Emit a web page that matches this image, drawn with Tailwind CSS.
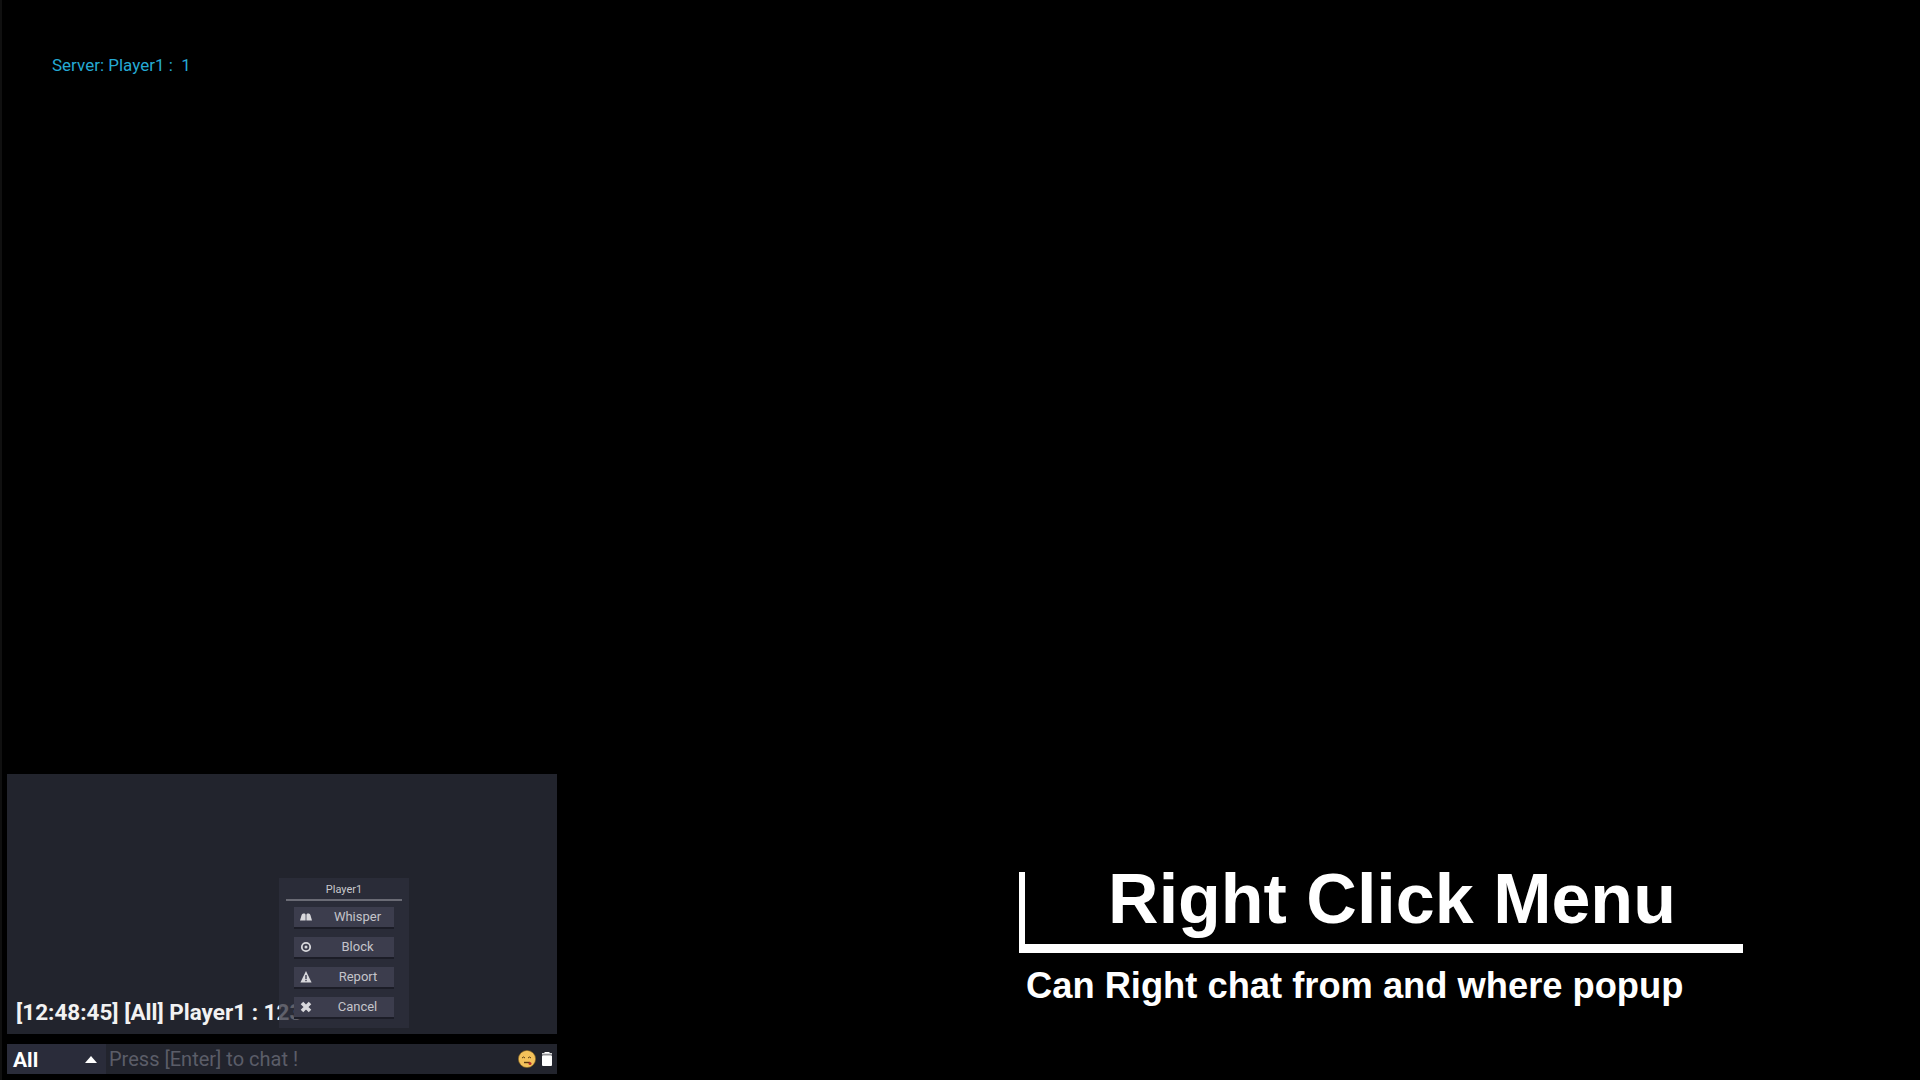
<!DOCTYPE html>
<html lang="en">
<head>
    <meta charset="UTF-8">
    <title>Right Click Menu</title>
    <script src="https://cdn.jsdelivr.net/npm/@tailwindcss/browser@4"></script>
</head>
<body class="bg-black w-[1920px] h-[1080px] overflow-hidden relative font-['Roboto',sans-serif]">
    <!-- faint strip down the left edge -->
    <div class="absolute left-0 top-0 w-[2px] h-full bg-[#101010]"></div>

    <!-- Server message -->
    <div class="pt-[54px] pl-[52px] text-[17px] leading-[22px] text-[#25aad4]">Server: Player1 :&nbsp; 1</div>

    <!-- Chat box -->
    <div class="absolute left-[7px] top-[774px] w-[550px]">
        <div class="relative h-[260px] bg-[#22242d] flex items-end pb-[7px] pl-[9px]">
            <div class="text-[22.5px] leading-[30px] font-bold text-[#f2f2f2] whitespace-nowrap">[12:48:45] [All] Player1 : 123</div>

            <!-- Right click menu -->
            <div class="absolute left-[272px] top-[104px] w-[130px] h-[150px] bg-[#2d2f3c]/75 flex flex-col items-center">
                <div class="h-[21px] leading-[22px] pt-[1px] text-[11px] text-[#c8c8cc]">Player1</div>
                <div class="w-[116px] h-[2px] bg-[#6a6b75] mb-[6px]"></div>
                <div class="flex flex-col gap-[8px]">
                    <div class="w-[100px] h-[22px] bg-[#3c3d4d] border-b-2 border-[#1c1d27] flex items-center text-[13px] text-[#c4c4ca]">
                        <svg class="w-[14px] h-[14px] ml-[5px]" viewBox="0 0 14 14" fill="#d8d8dc"><path d="M1 10.5 L2.6 5 Q3 3.5 4.2 3.5 H5.6 Q6.6 3.5 6.6 5 V10.5 Z M7.4 10.5 V5 Q7.4 3.5 8.4 3.5 H9.8 Q11 3.5 11.4 5 L13 10.5 Z"/></svg>
                        <span class="flex-1 text-center pl-[8px]">Whisper</span>
                    </div>
                    <div class="w-[100px] h-[22px] bg-[#3c3d4d] border-b-2 border-[#1c1d27] flex items-center text-[13px] text-[#c4c4ca]">
                        <svg class="w-[14px] h-[14px] ml-[5px]" viewBox="0 0 14 14" fill="none" stroke="#d8d8dc" stroke-width="1.8"><circle cx="7" cy="7" r="4.2"/><circle cx="7" cy="7" r="1.5" fill="#d8d8dc" stroke="none"/></svg>
                        <span class="flex-1 text-center pl-[8px]">Block</span>
                    </div>
                    <div class="w-[100px] h-[22px] bg-[#3c3d4d] border-b-2 border-[#1c1d27] flex items-center text-[13px] text-[#c4c4ca]">
                        <svg class="w-[14px] h-[14px] ml-[5px]" viewBox="0 0 14 14" fill="#d8d8dc"><path d="M7 1 L12.6 12.5 H1.4 Z"/><rect x="6.3" y="5" width="1.4" height="4" fill="#3c3d4d"/><rect x="6.3" y="9.8" width="1.4" height="1.4" fill="#3c3d4d"/></svg>
                        <span class="flex-1 text-center pl-[9px]">Report</span>
                    </div>
                    <div class="w-[100px] h-[22px] bg-[#3c3d4d] border-b-2 border-[#1c1d27] flex items-center text-[13px] text-[#c4c4ca]">
                        <svg class="w-[14px] h-[14px] ml-[5px]" viewBox="0 0 14 14" stroke="#d8d8dc" stroke-width="3.6"><path d="M3 3 L11 11 M11 3 L3 11"/></svg>
                        <span class="flex-1 text-center pl-[8px]">Cancel</span>
                    </div>
                </div>
            </div>
        </div>

        <!-- Input bar -->
        <div class="mt-[10px] h-[30px] bg-[#22242d] flex items-center">
            <div class="w-[99px] h-full bg-[#2a2c3a] flex items-center justify-between pl-[6px] pr-[9px]">
                <span class="text-[21px] font-bold text-white pt-[4px]">All</span>
                <svg class="w-[12px] h-[7px]" viewBox="0 0 12 7" fill="#fff"><path d="M6 0 L12 7 H0 Z"/></svg>
            </div>
            <div class="flex-1 pl-[3px] text-[20px] text-[#5b5d68]">Press [Enter] to chat !</div>
            <svg class="w-[18px] h-[18px] mr-[5px]" viewBox="0 0 18 18"><ellipse cx="9" cy="9" rx="8.6" ry="8.6" fill="#f4c25a" stroke="#8a6420" stroke-width="0.6"/><path d="M4 8 Q5.5 6 7 8 M10 8 Q11.5 6 13 8" stroke="#5a3a10" fill="none"/><path d="M6 12.5 H12" stroke="#5a3a10" stroke-width="1.4"/><circle cx="12" cy="13.5" r="1.5" fill="#b5332e"/></svg>
            <svg class="w-[12px] h-[14px] mr-[4px]" viewBox="0 0 12 14" fill="#fff"><rect x="3.5" y="0" width="5" height="1.2"/><rect x="1" y="1.2" width="10" height="1.3"/><rect x="1" y="3.3" width="10" height="10.7" rx="1"/></svg>
        </div>
    </div>

    <!-- Caption -->
    <div class="absolute left-[1019px] top-[872px] w-[724px] font-['Liberation_Sans',sans-serif] font-bold text-white">
        <div class="h-[81px] border-l-[6px] border-b-[9px] border-white text-center text-[70px] leading-[54px] pl-[16px]">Right Click Menu</div>
        <div class="pl-[7px] pt-[12px] text-[36.3px] leading-[42px]">Can Right chat from and where popup</div>
    </div>
</body>
</html>
